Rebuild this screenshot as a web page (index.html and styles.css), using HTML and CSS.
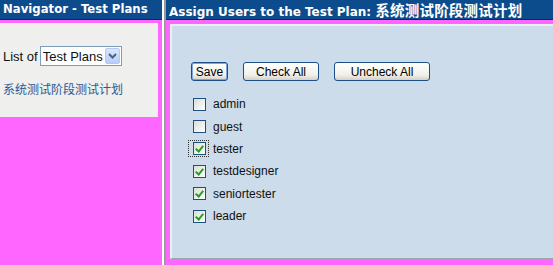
FILE: index.html
```html
<!DOCTYPE html>
<html lang="en">
  <head>
    <meta charset="UTF-8" />
    <title>Assign Users</title>
    <link rel="stylesheet" href="styles.css">
  </head>
  <body>
    <div id="frames">
      <div id="navigator">
        <div class="title">Navigator - Test Plans</div>
        <div class="nav-body">
          <div class="list-row">
            List of
            <span class="select">
              Test Plans
              <span class="select-arrow">
                <svg width="9" height="6" viewBox="0 0 9 6"><path d="M1 1 L4.5 4.5 L8 1" fill="none" stroke="#4d6185" stroke-width="2"/></svg>
              </span>
            </span>
          </div>
          <a class="plan-link" href="#">系统测试阶段测试计划</a>
        </div>
      </div>
      <div class="divider"></div>
      <div id="main">
        <div class="title title-main">Assign Users to the Test Plan: <span class="cjk">系统测试阶段测试计划</span></div>
        <div class="panel">
          <div class="buttons">
            <button class="btn btn-save">Save</button>
            <button class="btn btn-check">Check All</button>
            <button class="btn btn-uncheck">Uncheck All</button>
          </div>
          <ul class="users">
            <li><span class="box"></span>admin</li>
            <li><span class="box"></span>guest</li>
            <li><span class="focus"><span class="box checked"></span></span>tester</li>
            <li><span class="box checked"></span>testdesigner</li>
            <li><span class="box checked"></span>seniortester</li>
            <li><span class="box checked"></span>leader</li>
          </ul>
        </div>
      </div>
    </div>
  </body>
</html>
```

FILE: styles.css
```css
body {
  margin: 0;
  background-color: #ff66ff;
  font-family: "Liberation Sans", Arial, sans-serif;
  font-size: 12px;
  color: #111;
}

#frames {
  display: flex;
  height: 265px;
}

.title {
  height: 19px;
  line-height: 19px;
  background-color: #0c4c8c;
  border-bottom: 1px solid #0a2c55;
  color: #fff;
  font-family: "DejaVu Sans", Verdana, "Noto Sans CJK SC", sans-serif;
  font-weight: bold;
  font-size: 11.7px;
  padding-left: 3px;
  white-space: nowrap;
  overflow: hidden;
}

.title-main {
  font-size: 12px;
}

.title-main .cjk {
  font-family: "Noto Sans CJK SC", sans-serif;
  font-size: 14.5px;
  letter-spacing: 0.2px;
}

#navigator {
  width: 162px;
  display: flex;
  flex-direction: column;
}

.nav-body {
  margin-top: 3px;
  margin-right: 4px;
  height: 94px;
  background-color: #efefed;
  border-top: 1px solid #f7f3f7;
  padding: 22px 0 0 3px;
  box-sizing: border-box;
}

.list-row {
  display: flex;
  align-items: center;
  gap: 2px;
  font-size: 13px;
}

.select {
  display: inline-flex;
  align-items: center;
  justify-content: space-between;
  width: 82px;
  height: 20px;
  box-sizing: border-box;
  border: 1px solid #7f9db9;
  background-color: #fff;
  padding: 0 1px 0 2px;
  font-size: 13px;
}

.select-arrow {
  display: flex;
  align-items: center;
  justify-content: center;
  width: 15px;
  height: 16px;
  background: linear-gradient(#dbe6fd, #b7cdf8);
  border: 1px solid #b3c8f2;
  box-sizing: border-box;
  border-radius: 2px;
}

.plan-link {
  display: block;
  margin-top: 14px;
  color: #275a96;
  text-decoration: none;
  font-family: "Noto Sans CJK SC", sans-serif;
  font-size: 12px;
}

.divider {
  width: 2px;
  background-color: #fff;
  border-right: 2px solid #9a9a9a;
}

#main {
  flex: 1;
  display: flex;
  flex-direction: column;
  min-width: 0;
}

.panel {
  flex: 1;
  margin: 4px 0 6px 4px;
  background-color: #cddcea;
  border-top: 2px solid #e9eef4;
  border-left: 2px solid #e9eef4;
  border-bottom: 1px solid #9aa5ae;
  padding: 36px 0 0 19px;
}

.buttons {
  display: flex;
  gap: 15px;
}

.btn {
  height: 19px;
  padding: 0;
  font-family: "Liberation Sans", Arial, sans-serif;
  font-size: 12px;
  color: #000;
  background: linear-gradient(#ffffff, #f0f0ea 70%, #d6d0c5);
  border: 1px solid #1c4f88;
  border-radius: 3px;
}

.btn-save {
  width: 37px;
  box-shadow: inset 0 0 0 1px #7fa4de;
}

.btn-check {
  width: 76px;
}

.btn-uncheck {
  width: 96px;
}

.users {
  list-style: none;
  margin: 12px 0 0 0;
  padding: 0;
}

.users li {
  display: flex;
  align-items: center;
  height: 22.4px;
  gap: 7px;
  font-size: 12px;
}

.box {
  position: relative;
  display: inline-block;
  width: 13px;
  height: 13px;
  box-sizing: border-box;
  margin-left: 2px;
  border: 1px solid #1c5180;
  background: linear-gradient(135deg, #dcdcd7, #ffffff);
}

.box.checked::after {
  content: "";
  position: absolute;
  left: 3px;
  top: 1px;
  width: 3px;
  height: 6px;
  border-right: 2px solid #21a121;
  border-bottom: 2px solid #21a121;
  transform: rotate(40deg);
}

.focus {
  display: inline-flex;
  margin: 0 -3px 0 -3px;
  padding: 2px 3px;
  outline: 1px dotted #333;
  outline-offset: -1px;
}
```
